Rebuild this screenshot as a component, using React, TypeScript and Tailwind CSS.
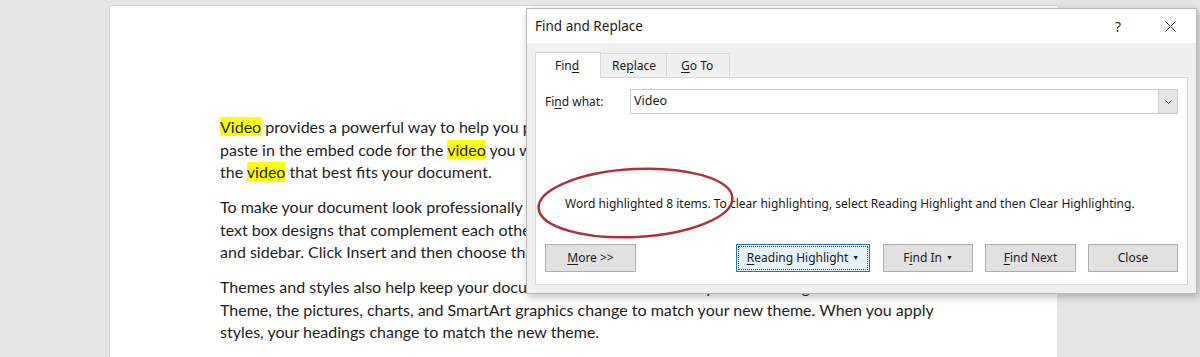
import React from 'react';

const docFont = { fontFamily: 'Lato, "Noto Sans", sans-serif' };

const Hl = ({ children }: { children: React.ReactNode }) => (
  <span className="bg-[#ffff00]">{children}</span>
);

const U = ({ children }: { children: React.ReactNode }) => <span className="underline underline-offset-2">{children}</span>;

const DialogButton = ({ children, focused }: { children: React.ReactNode; focused?: boolean }) => (
  <button
    className={`w-full h-[28px] text-[12px] text-[#1a1a1a] flex items-center justify-center ${
      focused
        ? 'bg-[#e5f1fb] border border-[#2a6fb0] outline outline-1 outline-dotted outline-offset-[-3px] outline-[#2c4a66]'
        : 'bg-[#e1e1e1] border border-[#adadad]'
    }`}
  >
    {children}
  </button>
);

const Caret = () => <span className="ml-[4px] text-[7px] leading-none relative top-[-1px]">▼</span>;

export default function App() {
  return (
    <div className="relative w-[1200px] h-[357px] overflow-hidden bg-[#e6e6e6]">
      {/* page */}
      <div className="ml-[109px] mt-[5px] w-[948px] h-[352px] bg-white border-l border-t border-[#d4d4d4] pl-[110px] pt-[110px] text-[16px] text-[#1e1e1e]" style={docFont}>
        <div className="leading-[22.5px] whitespace-nowrap mb-[12.5px]">
          <div><Hl>Video</Hl> provides a powerful way to help you prove your point. When you click Online <Hl>Video</Hl>, you can</div>
          <div>paste in the embed code for the <Hl>video</Hl> you want to add. You can also type a keyword to search online for</div>
          <div>the <Hl>video</Hl> that best fits your document.</div>
        </div>
        <div className="leading-[22.5px] whitespace-nowrap mb-[12.5px]">
          <div>To make your document look professionally produced, Word provides header, footer, cover page, and</div>
          <div>text box designs that complement each other. For example, you can add a matching cover page, header,</div>
          <div>and sidebar. Click Insert and then choose the elements you want from the different galleries.</div>
        </div>
        <div className="leading-[22.5px] whitespace-nowrap">
          <div>Themes and styles also help keep your document coordinated. When you click Design and choose a new</div>
          <div>Theme, the pictures, charts, and SmartArt graphics change to match your new theme. When you apply</div>
          <div>styles, your headings change to match the new theme.</div>
        </div>
      </div>

      {/* dialog */}
      <div
        className="absolute left-[526px] top-[8px] w-[671px] h-[286px] bg-[#f0f0f0] border border-[#b9b9b9] shadow-[2px_3px_8px_rgba(0,0,0,0.25)] flex flex-col text-[#1a1a1a]"
        style={{ fontFamily: '"Segoe UI", "Noto Sans", sans-serif' }}
      >
        <div className="h-[34px] bg-white flex items-center pl-[8px] pr-[20px] shrink-0">
          <span className="text-[13.5px]">Find and Replace</span>
          <span className="ml-auto text-[14px] text-[#333] mr-[44px]">?</span>
          <svg width="11" height="11" viewBox="0 0 11 11">
            <path d="M0.5 0.5 L10.5 10.5 M10.5 0.5 L0.5 10.5" stroke="#333" strokeWidth="1" />
          </svg>
        </div>
        <div className="flex-1 pl-[8px] pr-[8px] pt-[9px] pb-[8px] flex flex-col">
          <div className="flex items-end h-[26px] text-[12px]">
            <div className="w-[66px] h-[26px] bg-white border border-b-0 border-[#d9d9d9] flex items-center pl-[19px] relative z-10">Fin<U>d</U></div>
            <div className="w-[66px] h-[25px] border border-l-0 border-b-0 border-[#d9d9d9] flex items-center pl-[11px]">Re<U>p</U>lace</div>
            <div className="w-[63px] h-[25px] border border-l-0 border-b-0 border-[#d9d9d9] flex items-center pl-[14px]"><U>G</U>o To</div>
          </div>
          <div className="flex-1 bg-white border border-[#d9d9d9] -mt-px pl-[9px] pr-[9px] pt-[11px] flex flex-col">
            <div className="flex items-center h-[25px]">
              <span className="w-[85px] text-[12px]">Fi<U>n</U>d what:</span>
              <div className="flex-1 h-[25px] border border-[#c8c8c8] flex items-center">
                <span className="pl-[3px] text-[12.5px]">Video</span>
                <div className="ml-auto w-[19px] h-[23px] bg-[#e5e5e5] border-l border-[#cfcfcf] flex items-center justify-center">
                  <svg width="7" height="4" viewBox="0 0 7 4">
                    <path d="M0.5 0.5 L3.5 3.5 L6.5 0.5" fill="none" stroke="#555" strokeWidth="1" />
                  </svg>
                </div>
              </div>
            </div>
            <div className="pl-[20px] mt-[80px] h-[20px] flex items-center text-[12px] whitespace-nowrap">
              Word highlighted 8 items. To clear highlighting, select Reading Highlight and then Clear Highlighting.
            </div>
            <div className="mt-[30px] flex items-center">
              <div className="w-[91px]"><DialogButton><U>M</U>ore &gt;&gt;</DialogButton></div>
              <div className="ml-auto flex gap-[12px]">
                <div className="w-[134px] mr-px"><DialogButton focused><U>R</U>eading Highlight<Caret /></DialogButton></div>
                <div className="w-[90px]"><DialogButton>F<U>i</U>nd In<Caret /></DialogButton></div>
                <div className="w-[91px]"><DialogButton><U>F</U>ind Next</DialogButton></div>
                <div className="w-[90px]"><DialogButton>Close</DialogButton></div>
              </div>
            </div>
          </div>
        </div>
      </div>

      {/* annotation */}
      <svg className="absolute left-0 top-0 pointer-events-none" width="1200" height="357">
        <ellipse cx="635.5" cy="203" rx="97" ry="34" fill="none" stroke="#ad3239" strokeWidth="2.5" transform="rotate(-3 635.5 203)" />
      </svg>
    </div>
  );
}
